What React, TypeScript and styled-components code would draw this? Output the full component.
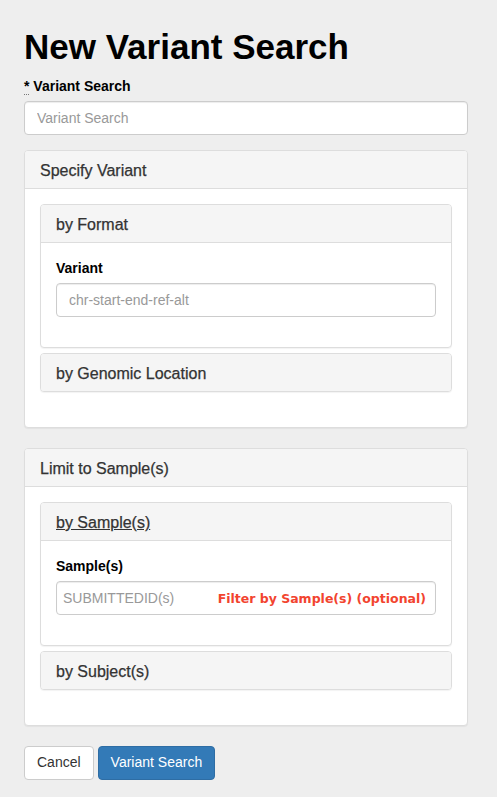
import React from "react";
import styled, { createGlobalStyle } from "styled-components";

const Global = createGlobalStyle`
  html, body { margin: 0; padding: 0; background: #eeeeee; }
  body {
    font-family: "Liberation Sans", Arial, Helvetica, sans-serif;
    font-size: 14px;
    line-height: 1.42857;
    color: #333;
  }
  * { box-sizing: border-box; }
`;

const Page = styled.div`
  padding: 8px 29px 20px 24px;
`;

const Title = styled.h1`
  margin: 20px 0 10px;
  font-size: 35px;
  line-height: 38px;
  font-weight: 700;
  color: #000;
`;

const FormGroup = styled.div`
  margin-bottom: 15px;
`;

const Label = styled.label`
  display: block;
  margin-bottom: 5px;
  font-weight: 700;
  color: #000;
  font-size: 14px;
  line-height: 20px;
`;

const Abbr = styled.abbr`
  text-decoration: none;
  border-bottom: 1px dotted #777;
`;

const Input = styled.input`
  display: block;
  width: 100%;
  height: 34px;
  padding: 6px 12px;
  font-family: inherit;
  font-size: 14px;
  line-height: 1.42857;
  color: #555;
  background: #fff;
  border: 1px solid #ccc;
  border-radius: 4px;
  box-shadow: inset 0 1px 1px rgba(0, 0, 0, 0.075);
  outline: none;
  &::placeholder { color: #999; }
`;

const TagBox = styled.div`
  display: flex;
  align-items: center;
  height: 34px;
  padding: 0 9px 0 6px;
  background: #fff;
  border: 1px solid #ccc;
  border-radius: 4px;
  box-shadow: inset 0 1px 1px rgba(0, 0, 0, 0.075);
`;

const TagInput = styled.input`
  flex: 1;
  min-width: 0;
  border: none;
  outline: none;
  padding: 0;
  font-family: inherit;
  font-size: 14px;
  color: #555;
  background: transparent;
  &::placeholder { color: #999; }
`;

const Hint = styled.span`
  font-family: "DejaVu Sans", Verdana, sans-serif;
  font-weight: 700;
  font-size: 12.5px;
  color: #f2442f;
  white-space: nowrap;
  padding-top: 2px;
`;

const Panel = styled.div<{ $nested?: boolean }>`
  background: #fff;
  border: 1px solid #ddd;
  border-radius: 4px;
  box-shadow: 0 1px 1px rgba(0, 0, 0, 0.05);
  margin-bottom: ${(p) => (p.$nested ? "0" : "20px")};
  overflow: hidden;
  & + & { margin-top: ${(p) => (p.$nested ? "5px" : "0")}; }
`;

const PanelHeading = styled.div<{ $open?: boolean }>`
  background: #f5f5f5;
  padding: 11px 15px 9px;
  border-bottom: ${(p) => (p.$open ? "1px solid #ddd" : "none")};
`;

const PanelTitle = styled.h4<{ $link?: boolean }>`
  margin: 0;
  font-size: 16px;
  line-height: 17px;
  font-weight: 400;
  color: #333;
  -webkit-text-stroke: 0.25px #333;
  text-decoration: ${(p) => (p.$link ? "underline" : "none")};
`;

const PanelBody = styled.div`
  padding: 15px;
`;

const PanelGroup = styled.div`
  margin-bottom: 20px;
`;

const Buttons = styled.div`
  display: flex;
  gap: 4px;
`;

const Button = styled.button<{ $primary?: boolean }>`
  height: 34px;
  padding: 6px 12px;
  font-family: inherit;
  font-size: 14px;
  line-height: 1.42857;
  border-radius: 4px;
  border: 1px solid ${(p) => (p.$primary ? "#2e6da4" : "#ccc")};
  background: ${(p) => (p.$primary ? "#337ab7" : "#fff")};
  color: ${(p) => (p.$primary ? "#fff" : "#333")};
`;

export default function App() {
  return (
    <>
      <Global />
      <Page>
        <Title>New Variant Search</Title>
        <FormGroup>
          <Label>
            <Abbr title="required">*</Abbr> Variant Search
          </Label>
          <Input placeholder="Variant Search" />
        </FormGroup>

        <Panel>
          <PanelHeading $open>
            <PanelTitle>Specify Variant</PanelTitle>
          </PanelHeading>
          <PanelBody>
            <PanelGroup>
              <Panel $nested>
                <PanelHeading $open>
                  <PanelTitle>by Format</PanelTitle>
                </PanelHeading>
                <PanelBody>
                  <FormGroup>
                    <Label>Variant</Label>
                    <Input placeholder="chr-start-end-ref-alt" />
                  </FormGroup>
                </PanelBody>
              </Panel>
              <Panel $nested>
                <PanelHeading>
                  <PanelTitle>by Genomic Location</PanelTitle>
                </PanelHeading>
              </Panel>
            </PanelGroup>
          </PanelBody>
        </Panel>

        <Panel>
          <PanelHeading $open>
            <PanelTitle>Limit to Sample(s)</PanelTitle>
          </PanelHeading>
          <PanelBody>
            <PanelGroup>
              <Panel $nested>
                <PanelHeading $open>
                  <PanelTitle $link>by Sample(s)</PanelTitle>
                </PanelHeading>
                <PanelBody>
                  <FormGroup>
                    <Label>Sample(s)</Label>
                    <TagBox>
                      <TagInput placeholder="SUBMITTEDID(s)" />
                      <Hint>Filter by Sample(s) (optional)</Hint>
                    </TagBox>
                  </FormGroup>
                </PanelBody>
              </Panel>
              <Panel $nested>
                <PanelHeading>
                  <PanelTitle>by Subject(s)</PanelTitle>
                </PanelHeading>
              </Panel>
            </PanelGroup>
          </PanelBody>
        </Panel>

        <Buttons>
          <Button>Cancel</Button>
          <Button $primary>Variant Search</Button>
        </Buttons>
      </Page>
    </>
  );
}
